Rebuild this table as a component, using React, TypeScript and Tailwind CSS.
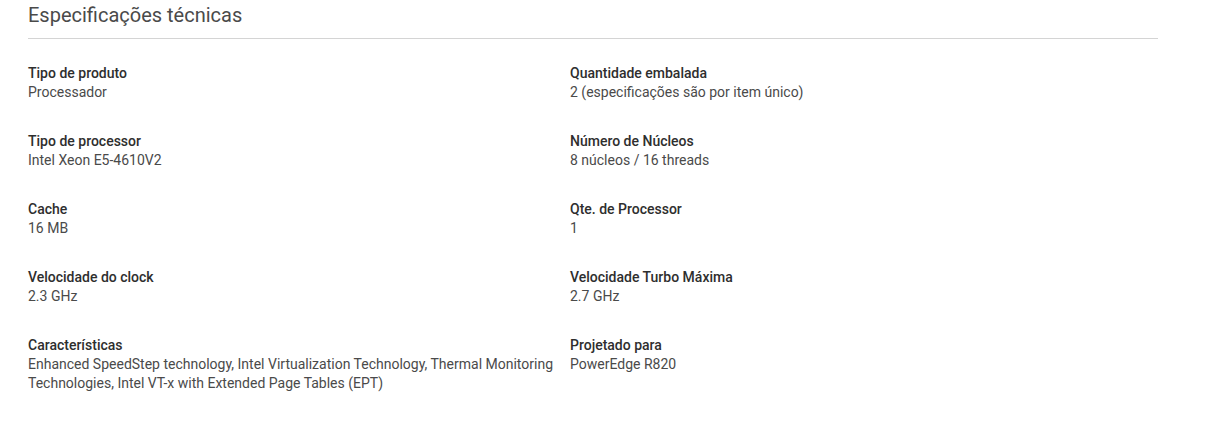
import React from "react";

const specs: [string, string][] = [
  ["Tipo de produto", "Processador"],
  ["Quantidade embalada", "2 (especificações são por item único)"],
  ["Tipo de processor", "Intel Xeon E5-4610V2"],
  ["Número de Núcleos", "8 núcleos / 16 threads"],
  ["Cache", "16 MB"],
  ["Qte. de Processor", "1"],
  ["Velocidade do clock", "2.3 GHz"],
  ["Velocidade Turbo Máxima", "2.7 GHz"],
  [
    "Características",
    "Enhanced SpeedStep technology, Intel Virtualization Technology, Thermal Monitoring Technologies, Intel VT-x with Extended Page Tables (EPT)",
  ],
  ["Projetado para", "PowerEdge R820"],
];

export default function App() {
  return (
    <div className="min-h-[434px] bg-white font-['Roboto',sans-serif]">
      <div className="w-[1130px] ml-[28px]">
        <div className="pt-[3px] pb-[11px] border-b border-[#d4d4d4]">
          <h2 className="text-[20px] leading-[24px] text-[#4a4a4a]">Especificações técnicas</h2>
        </div>
        <dl className="grid grid-cols-[542px_542px] gap-y-[30px] pt-[25px]">
          {specs.map(([label, value]) => (
            <div key={label} className="pr-[12px] text-[14px] leading-[19px]">
              <dt className="font-medium text-[#2e2e2e]">{label}</dt>
              <dd className="text-[#4a4a4a]">{value}</dd>
            </div>
          ))}
        </dl>
      </div>
    </div>
  );
}
